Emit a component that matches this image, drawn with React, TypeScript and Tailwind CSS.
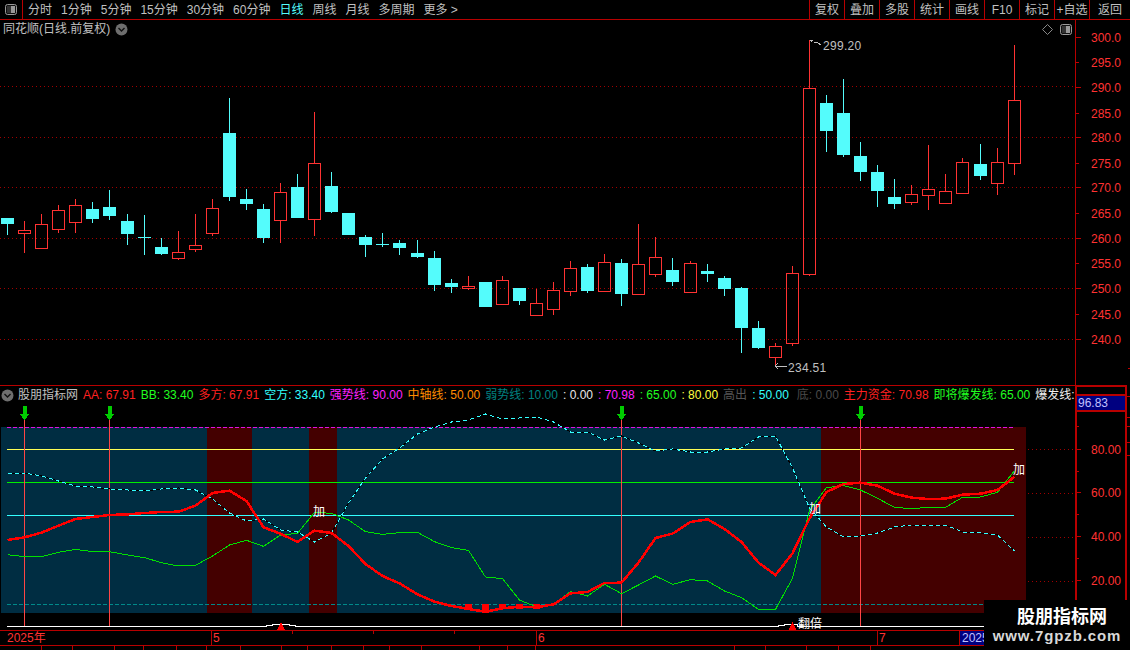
const candles: [number, number, number, number, boolean][] = [
  // hi, lo, body top, body bottom, up (red)
  [218, 235, 218, 224, false],
  [221, 253, 230, 233, true],
  [214, 248, 224, 248, true],
  [205, 233, 210, 229, true],
  [199, 233, 205, 222, true],
  [202, 223, 209, 219, false],
  [190, 220, 207, 216, false],
  [214, 245, 221, 234, false],
  [215, 255, 237, 238, false],
  [238, 255, 247, 254, false],
  [231, 260, 252, 258, true],
  [214, 252, 245, 249, true],
  [199, 236, 208, 233, true],
  [98, 201, 133, 197, false],
  [189, 210, 199, 204, false],
  [204, 243, 209, 238, false],
  [183, 243, 192, 220, true],
  [174, 218, 187, 218, false],
  [112, 236, 163, 219, true],
  [172, 213, 186, 212, false],
  [213, 235, 213, 235, false],
  [235, 257, 237, 245, false],
  [233, 247, 244, 245, false],
  [240, 255, 243, 248, false],
  [240, 258, 253, 257, false],
  [251, 291, 258, 285, false],
  [279, 293, 283, 287, false],
  [276, 290, 286, 288, true],
  [282, 307, 282, 307, false],
  [276, 304, 280, 304, true],
  [288, 305, 288, 301, false],
  [289, 315, 303, 315, true],
  [282, 315, 290, 309, true],
  [261, 296, 268, 291, true],
  [264, 293, 267, 291, false],
  [254, 291, 262, 291, true],
  [259, 306, 263, 294, false],
  [224, 295, 264, 294, true],
  [237, 277, 257, 274, true],
  [258, 286, 270, 282, false],
  [261, 292, 263, 292, true],
  [264, 282, 271, 274, false],
  [276, 296, 278, 289, false],
  [287, 353, 288, 328, false],
  [321, 349, 328, 348, false],
  [343, 366, 346, 357, true],
  [266, 346, 273, 343, true],
  [40, 276, 88, 274, true],
  [95, 152, 103, 131, false],
  [79, 157, 113, 155, false],
  [142, 181, 156, 172, false],
  [165, 207, 172, 191, false],
  [179, 209, 197, 204, false],
  [185, 205, 194, 202, true],
  [145, 210, 189, 195, true],
  [174, 204, 191, 203, true],
  [158, 193, 162, 193, true],
  [144, 180, 164, 176, false],
  [148, 195, 162, 183, true],
  [45, 175, 100, 163, true],
];

const redLine = [
  360, 352, 338, 317, 297, 291, 285, 283, 279, 276, 275, 257, 219, 212, 243, 322, 341, 366, 332, 339, 378, 432, 468, 490,
  523, 545, 558, 567, 575, 565, 560, 562, 553, 520, 516, 489, 488, 428, 354, 341, 306, 298, 327, 366, 428, 465, 400, 295,
  216, 192, 188, 197, 221, 233, 237, 236, 224, 221, 210, 170,
].map((v) => 420 + v / 3);

const greenLine = [
  404, 410, 410, 397, 388, 395, 395, 405, 413, 428, 438, 436, 408, 375, 361, 379, 345, 340, 277, 280, 300, 335, 343, 338,
  337, 365, 383, 391, 471, 476, 540, 561, 552, 515, 528, 493, 521, 495, 468, 493, 479, 483, 513, 533, 568, 568, 475, 270,
  203, 197, 210, 235, 262, 266, 262, 262, 232, 231, 217, 152,
].map((v) => 420 + v / 3);

const cyanLine = [
  473, 473, 476, 481, 486, 487, 489, 490, 491, 489, 488, 490, 499, 513, 521, 519, 530, 532, 542, 533, 503, 478, 459, 448,
  434, 427, 422, 420, 414, 419, 418, 417, 422, 432, 432, 440, 436, 443, 451, 449, 452, 452, 449, 448, 437, 436, 468, 508,
  527, 537, 536, 533, 527, 525, 525, 525, 532, 533, 535, 551,
];

const candleX = (i: number) => Math.floor(7.6 + 17.06 * i) + 0.5;
const toPoints = (line: number[]) => line.map((y, i) => `${candleX(i)},${y}`).join(" ");

const leftTabs = ["分时", "1分钟", "5分钟", "15分钟", "30分钟", "60分钟", "日线", "周线", "月线", "多周期", "更多 >"];
const rightTabs = ["复权", "叠加", "多股", "统计", "画线", "F10", "标记", "+自选"];

const legend = [
  { text: "AA: 67.91", color: "text-[#ff2020]" },
  { text: "BB: 33.40", color: "text-[#20ff20]" },
  { text: "多方: 67.91", color: "text-[#ff2020]" },
  { text: "空方: 33.40", color: "text-[#33ffff]" },
  { text: "强势线: 90.00", color: "text-[#ff20ff]" },
  { text: "中轴线: 50.00", color: "text-[#ff8c00]" },
  { text: "弱势线: 10.00", color: "text-[#008080]" },
  { text: ": 0.00", color: "text-[#e8e8e8]" },
  { text: ": 70.98", color: "text-[#ff20ff]" },
  { text: ": 65.00", color: "text-[#20ff20]" },
  { text: ": 80.00", color: "text-[#ffff40]" },
  { text: "高出", color: "text-[#555555]" },
  { text: ": 50.00", color: "text-[#33ffff] mr-[3px]" },
  { text: "底: 0.00", color: "text-[#4a4a4a]" },
  { text: "主力资金: 70.98", color: "text-[#ff2020]" },
  { text: "即将爆发线: 65.00", color: "text-[#20ff20]" },
  { text: "爆发线:", color: "text-[#f0f0f0]" },
];

const priceTicks = [
  { y: 37, label: "300.0" },
  { y: 62, label: "295.0" },
  { y: 87, label: "290.0" },
  { y: 113, label: "285.0" },
  { y: 137, label: "280.0" },
  { y: 163, label: "275.0" },
  { y: 187, label: "270.0" },
  { y: 213, label: "265.0" },
  { y: 238, label: "260.0" },
  { y: 263, label: "255.0" },
  { y: 288, label: "250.0" },
  { y: 314, label: "245.0" },
  { y: 339, label: "240.0" },
];

const bottomCells = [42, 31, 42, 29, 33, 30, 34, 41, 26, 24, 32, 26, 32, 58, 28, 28, 199, 31, 41, 32, 32];

const Toggle = () => (
  <svg width="12" height="11" viewBox="0 0 12 11">
    <rect x="0.5" y="0.5" width="11" height="10" rx="2" fill="#111" stroke="#999" />
    <rect x="6" y="2" width="4" height="7" fill="#999" />
    <rect x="2" y="2" width="4" height="7" fill="#333" />
  </svg>
);

const Chevron = () => (
  <svg width="13" height="13" viewBox="0 0 13 13">
    <circle cx="6.5" cy="6.5" r="6" fill="#6e6e6e" />
    <path d="M3.5 5 L6.5 8 L9.5 5" fill="none" stroke="#111" strokeWidth="1.4" />
  </svg>
);

const PriceChart = () => (
  <svg width="1075" height="347" viewBox="0 38 1075 347" shapeRendering="crispEdges" className="block">
    {[86, 137, 187, 238, 288, 339].map((y) => (
      <line key={y} x1="0" x2="1075" y1={y + 0.5} y2={y + 0.5} stroke="#a00000" strokeDasharray="1 3" shapeRendering="auto" />
    ))}
    {candles.map(([hi, lo, top, bottom, up], i) => {
      const x = candleX(i);
      const c = up ? "#ff3232" : "#54fcfc";
      return (
        <g key={i}>
          <line x1={x} x2={x} y1={hi} y2={top} stroke={c} />
          <line x1={x} x2={x} y1={bottom} y2={lo} stroke={c} />
          {up ? (
            <rect x={x - 6} y={top + 0.5} width="12" height={bottom - top} fill="none" stroke={c} />
          ) : (
            <rect x={x - 6.5} y={top} width="13" height={Math.max(bottom - top, 1)} fill={c} />
          )}
        </g>
      );
    })}
    <path d="M810 40 H813 M810 40 L812 42 M814 43 L817 42 L821 45" fill="none" stroke="#c0c0c0" />
    <text x="823" y="50" fill="#c0c0c0" fontSize="12" letterSpacing="0.3" shapeRendering="auto">299.20</text>
    <path d="M775 366 H787 M775 366 L778 363 M775 366 L778 369" fill="none" stroke="#c0c0c0" />
    <text x="788" y="372" fill="#c0c0c0" fontSize="12" letterSpacing="0.3" shapeRendering="auto">234.51</text>
  </svg>
);

const PriceAxis = () => (
  <svg width="54" height="365" viewBox="1076 20 54 365" shapeRendering="crispEdges" className="block">
    {priceTicks.map((t, i) => (
      <g key={t.y}>
        <line x1="1076" x2={i % 2 ? 1079 : 1081} y1={t.y + 0.5} y2={t.y + 0.5} stroke="#c00000" />
        <text x="1091" y={t.y + 4.5} fill="#ff3232" fontSize="12" shapeRendering="auto">{t.label}</text>
      </g>
    ))}
    <line x1="1128" x2="1130" y1="368.5" y2="368.5" stroke="#c00000" />
  </svg>
);

const IndicatorChart = () => (
  <svg width="1075" height="226" viewBox="0 404 1075 226" shapeRendering="crispEdges" className="block">
    <rect x="1" y="427" width="1025" height="186" fill="#002d42" />
    <rect x="207" y="427" width="45" height="186" fill="#440000" />
    <rect x="309" y="427" width="28" height="186" fill="#440000" />
    <rect x="821" y="427" width="205" height="186" fill="#440000" />
    {[449, 493, 537, 581].map((y) => (
      <line key={y} x1="1028" x2="1075" y1={y + 0.5} y2={y + 0.5} stroke="#a00000" strokeDasharray="1 3" shapeRendering="auto" />
    ))}
    <line x1="7" x2="1014" y1="427.5" y2="427.5" stroke="#e010e0" strokeDasharray="4 2" />
    <line x1="7" x2="1014" y1="449.5" y2="449.5" stroke="#ffff55" />
    <line x1="7" x2="1014" y1="482.5" y2="482.5" stroke="#00ee00" />
    <line x1="7" x2="1014" y1="515.5" y2="515.5" stroke="#33ffff" />
    <line x1="7" x2="1014" y1="604.5" y2="604.5" stroke="#008a8a" strokeDasharray="4 2" />
    {[24.5, 109.5, 621.5, 860.5].map((x) => (
      <g key={x}>
        <line x1={x} x2={x} y1="406" y2="627" stroke="#ff4545" />
        <path d={`M${x - 2} 406 H${x + 2} V414 H${x + 5} L${x} 420 L${x - 5} 414 H${x - 2} Z`} fill="#00cc00" />
      </g>
    ))}
    {[465, 482, 499, 516, 533].map((x) => (
      <rect key={x} x={x} y="604" width="7" height={x === 482 ? 9 : 5} fill="#ff0000" />
    ))}
    <polyline points={toPoints(cyanLine)} fill="none" stroke="#000000" />
    <polyline points={toPoints(cyanLine)} fill="none" stroke="#33ffff" strokeDasharray="4 3" />
    <polyline points={toPoints(greenLine)} fill="none" stroke="#00e000" />
    <polyline points={toPoints(redLine)} fill="none" stroke="#ff0000" strokeWidth="2.5" />
    <polyline
      points="7,626.5 266,626.5 266,625.5 272,625.5 272,624.5 289,624.5 289,625.5 295,625.5 295,626.5 778,626.5 778,625.5 784,625.5 784,624.5 797,624.5 797,626.5 984,626.5"
      fill="none"
      stroke="#ffffff"
    />
    <path d="M281 622 L285 630 H277 Z" fill="#ff0000" />
    <path d="M792.5 622 L796.5 630 H788.5 Z" fill="#ff0000" />
    <g fill="#ffffff" fontSize="12" shapeRendering="auto">
      <text x="313" y="516">加</text>
      <text x="809" y="513">加</text>
      <text x="1013" y="474">加</text>
      <text x="798" y="628">翻倍</text>
    </g>
  </svg>
);

const IndicatorAxis = () => (
  <svg width="48" height="233" viewBox="1077 413 48 233" shapeRendering="crispEdges" className="block">
    {[427, 472, 515, 559, 603].map((y) => (
      <line key={y} x1="1077" x2="1079" y1={y + 0.5} y2={y + 0.5} stroke="#c00000" />
    ))}
    {[
      { y: 450, label: "80.00" },
      { y: 493, label: "60.00" },
      { y: 537, label: "40.00" },
      { y: 581, label: "20.00" },
    ].map((t) => (
      <g key={t.y}>
        <line x1="1077" x2="1081" y1={t.y + 0.5} y2={t.y + 0.5} stroke="#c00000" />
        <text x="1091" y={t.y + 4.5} fill="#ff3232" fontSize="12" shapeRendering="auto">{t.label}</text>
      </g>
    ))}
  </svg>
);

// the short marks right of the indicator axis
const EdgeMarks = () => (
  <svg width="3" height="264" viewBox="1127 386 3 264" shapeRendering="crispEdges" className="block">
    {[397, 418, 427, 443, 456].map((y) => (
      <line key={y} x1="1127" x2="1130" y1={y + 0.5} y2={y + 0.5} stroke="#c00000" />
    ))}
  </svg>
);

export default function App() {
  return (
    <div className="relative flex h-[650px] w-[1130px] flex-col overflow-hidden bg-black font-['Liberation_Sans','Noto_Sans_CJK_SC',sans-serif] text-[12px] leading-none text-[#c0c0c0]">
      {/* top toolbar */}
      <header className="flex h-[20px] shrink-0 items-stretch border-b border-[#b80000]">
        <div className="flex w-[23px] items-center justify-center border-r border-[#b80000]">
          <Toggle />
        </div>
        <nav className="flex flex-1 items-center gap-[9px] pl-[5px]">
          {leftTabs.map((t) => (
            <span key={t} className={t === "日线" ? "text-[#54fcfc]" : ""}>{t}</span>
          ))}
        </nav>
        <div className="flex">
          {rightTabs.map((t) => (
            <span key={t} className="flex w-[35px] items-center justify-center border-l border-[#b80000]">{t}</span>
          ))}
          <span className="flex w-[41px] items-center justify-center border-l border-[#b80000]">返回</span>
        </div>
      </header>

      <div className="flex flex-1">
        {/* charts */}
        <div className="flex w-[1075px] flex-col">
          <div className="flex h-[18px] items-center justify-between pl-[3px] pr-[3px]">
            <div className="flex items-center gap-[5px]">
              <span>同花顺(日线.前复权)</span>
              <Chevron />
            </div>
            <div className="flex items-center gap-[7px]">
              <svg width="11" height="11" viewBox="0 0 11 11">
                <path d="M5.5 0.5 L10.5 5.5 L5.5 10.5 L0.5 5.5 Z" fill="none" stroke="#888" />
              </svg>
              <Toggle />
            </div>
          </div>
          <PriceChart />

          <div className="flex h-[19px] items-center gap-[5px] overflow-hidden whitespace-nowrap border-t border-[#b80000] pl-[1px]">
            <Chevron />
            <span className="-ml-[1px]">股朋指标网</span>
            {legend.map((l) => (
              <span key={l.text} className={l.color}>{l.text}</span>
            ))}
          </div>
          <IndicatorChart />

          <div className="relative flex h-[16px] border-y border-[#b80000] text-[#ff3232]">
            <span className="flex w-[211px] items-center pl-[7px]">2025年</span>
            <span className="flex w-[325px] items-center border-l border-[#b80000] pl-[1px]">5</span>
            <span className="flex w-[341px] items-center border-l border-[#b80000] pl-[1px]">6</span>
            <span className="flex w-[82px] items-center border-l border-[#b80000] pl-[1px]">7</span>
            <span className="flex flex-1 items-center border-l border-[#b80000] bg-[#000080] pl-[2px] text-[#c0c0ff]">2025</span>
            <i className="absolute left-[292px] top-0 h-[3px] w-px bg-[#b80000]" />
            <i className="absolute left-[373px] top-0 h-[3px] w-px bg-[#b80000]" />
            <i className="absolute left-[454px] top-0 h-[3px] w-px bg-[#b80000]" />
          </div>
          <div className="flex flex-1">
            {bottomCells.map((w, i) => (
              <span key={i} style={{ width: w }} className="border-r border-[#b80000]" />
            ))}
          </div>
        </div>

        {/* right axis */}
        <aside className="flex w-[55px] flex-col border-l border-[#b80000]">
          <PriceAxis />
          <div className="flex flex-1">
            <div className="flex w-[51px] flex-col border-l border-r-2 border-t-2 border-[#b80000]">
              <div className="h-[9px] border-b-2 border-[#b80000]" />
              <div className="flex h-[16px] items-center border-b-2 border-[#b80000] bg-[#000080] pl-[1px] text-[#c0c0ff]">96.83</div>
              <IndicatorAxis />
            </div>
            <EdgeMarks />
          </div>
        </aside>
      </div>

      {/* watermark */}
      <div className="absolute bottom-0 right-0 flex h-[50px] w-[146px] flex-col items-center justify-center gap-[2px] bg-black">
        <span className="ml-[10px] text-[18px] font-bold text-white">股朋指标网</span>
        <span className="text-[15px] font-bold tracking-[0.9px] text-[#d8d8d8]">www.7gpzb.com</span>
      </div>
    </div>
  );
}
